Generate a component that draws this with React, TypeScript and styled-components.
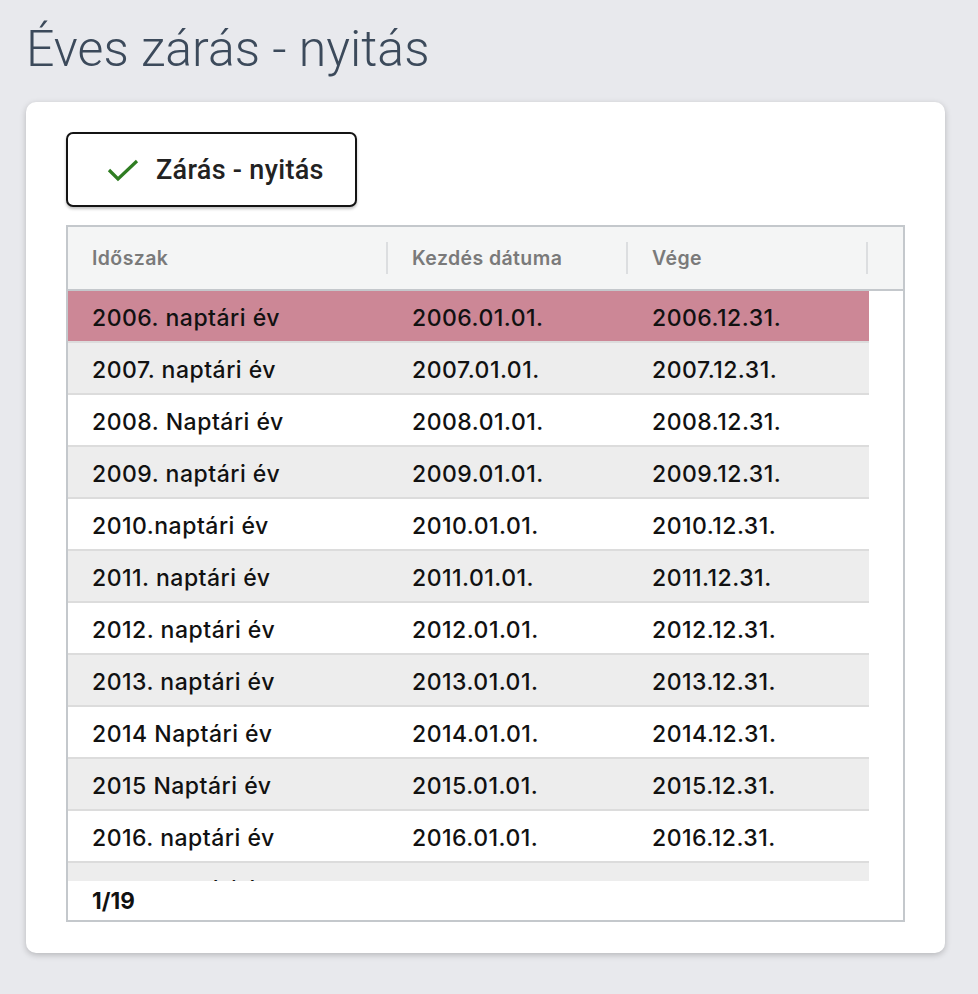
import React from "react"
import styled, { createGlobalStyle } from "styled-components"

const GlobalStyle = createGlobalStyle`
	body {
		margin: 0;
		background-color: #e8e9ed;
		font-family: Inter, "Noto Sans", sans-serif;
	}
`

interface Period {
	name: string
	start: string
	end: string
}

const names = [
	"2006. naptári év",
	"2007. naptári év",
	"2008. Naptári év",
	"2009. naptári év",
	"2010.naptári év",
	"2011. naptári év",
	"2012. naptári év",
	"2013. naptári év",
	"2014 Naptári év",
	"2015 Naptári év",
	"2016. naptári év",
	"2017. naptári év",
	"2018. naptári év",
	"2019. naptári év",
	"2020. naptári év",
	"2021. naptári év",
	"2022. naptári év",
	"2023. naptári év",
	"2024. naptári év",
]

const periods: Period[] = names.map((name, i) => ({
	name,
	start: `${2006 + i}.01.01.`,
	end: `${2006 + i}.12.31.`,
}))

const Page = styled.div`
	padding: 12px 33px 40px 26px;
`

const Title = styled.h1`
	margin: 0 0 16px 0;
	font-family: Roboto, "Noto Sans", sans-serif;
	font-weight: 300;
	font-size: 50px;
	line-height: 74px;
	color: #3c4a5b;
`

const Card = styled.div`
	background-color: #ffffff;
	border-radius: 10px;
	box-shadow: 0 2px 6px rgba(0, 0, 0, 0.22);
	padding: 30px 40px 31px 40px;
	display: flex;
	flex-direction: column;
	gap: 18px;
`

const ActionButton = styled.button`
	width: 291px;
	height: 75px;
	box-sizing: border-box;
	border: 2px solid #141414;
	border-radius: 7px;
	background-color: #ffffff;
	box-shadow: 0 2px 3px rgba(0, 0, 0, 0.25);
	display: flex;
	align-items: center;
	gap: 16px;
	padding: 0 0 0 38px;
	font-family: Roboto, "Noto Sans", sans-serif;
	font-weight: 500;
	font-size: 27px;
	letter-spacing: 0.3px;
	color: #222222;
	cursor: pointer;
`

const Grid = styled.div`
	width: 839px;
	height: 697px;
	box-sizing: border-box;
	border: 2px solid #c4c8cc;
	display: flex;
	flex-direction: column;
	background-color: #ffffff;
`

const HeaderRow = styled.div`
	height: 62px;
	flex: 0 0 62px;
	display: flex;
	align-items: center;
	background-color: #f4f5f5;
	border-bottom: 2px solid #c4c8cc;
`

const HeaderCell = styled.div<{ $width: number }>`
	width: ${(p) => p.$width}px;
	box-sizing: border-box;
	padding-left: 24px;
	height: 32px;
	display: flex;
	align-items: center;
	border-right: 2px solid #dcdee0;
	font-size: 19.5px;
	font-weight: 600;
	letter-spacing: 0.4px;
	color: #7a7a7a;
`

const Body = styled.div`
	flex: 0 0 590px;
	overflow: hidden;
`

const Row = styled.div<{ $selected: boolean; $odd: boolean }>`
	width: 801px;
	height: 50px;
	display: flex;
	align-items: center;
	border-bottom: 2px solid #dcdcdc;
	background-color: ${(p) =>
		p.$selected ? "#cc8796" : p.$odd ? "#ededed" : "#ffffff"};
`

const Cell = styled.div<{ $width: number }>`
	width: ${(p) => p.$width}px;
	box-sizing: border-box;
	padding-left: 24px;
	padding-top: 4px;
	font-size: 23px;
	font-weight: 500;
	letter-spacing: 0.5px;
	color: #111111;
	white-space: nowrap;
	overflow: hidden;
`

const Footer = styled.div`
	flex: 1;
	display: flex;
	align-items: center;
	padding-left: 24px;
	font-size: 22.5px;
	font-weight: 700;
	color: #111111;
`

const colWidths = [320, 240, 240]

const CheckIcon = () => (
	<svg width="34" height="24" viewBox="0 0 34 24">
		<polyline
			points="3,12 12,21 31,3"
			fill="none"
			stroke="#2f7d22"
			strokeWidth="3.2"
		/>
	</svg>
)

const App = () => {
	const [selected, setSelected] = React.useState<number>(0)

	return (
		<Page>
			<GlobalStyle />
			<Title>Éves zárás - nyitás</Title>
			<Card>
				<ActionButton>
					<CheckIcon />
					Zárás - nyitás
				</ActionButton>
				<Grid>
					<HeaderRow>
						<HeaderCell $width={colWidths[0]}>Időszak</HeaderCell>
						<HeaderCell $width={colWidths[1]}>Kezdés dátuma</HeaderCell>
						<HeaderCell $width={colWidths[2]}>Vége</HeaderCell>
					</HeaderRow>
					<Body>
						{periods.map((p, i) => (
							<Row
								key={p.name}
								$selected={i === selected}
								$odd={i % 2 === 1}
								onClick={() => setSelected(i)}
							>
								<Cell $width={colWidths[0]}>{p.name}</Cell>
								<Cell $width={colWidths[1]}>{p.start}</Cell>
								<Cell $width={colWidths[2]}>{p.end}</Cell>
							</Row>
						))}
					</Body>
					<Footer>1/{periods.length}</Footer>
				</Grid>
			</Card>
		</Page>
	)
}

export default App
